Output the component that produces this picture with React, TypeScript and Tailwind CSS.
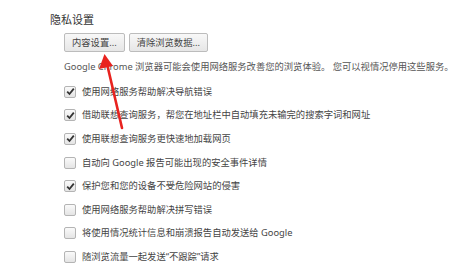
const FONT = "font-['Noto_Sans','Noto_Sans_CJK_SC',sans-serif]";

const rows = [
  { label: "使用网络服务帮助解决导航错误", checked: true },
  { label: "借助联想查询服务，帮您在地址栏中自动填充未输完的搜索字词和网址", checked: true },
  { label: "使用联想查询服务更快速地加载网页", checked: true },
  { label: "自动向 Google 报告可能出现的安全事件详情", checked: false },
  { label: "保护您和您的设备不受危险网站的侵害", checked: true },
  { label: "使用网络服务帮助解决拼写错误", checked: false },
  { label: "将使用情况统计信息和崩溃报告自动发送给 Google", checked: false },
  { label: "随浏览流量一起发送“不跟踪”请求", checked: false },
];

function Checkbox({ checked }: { checked: boolean }) {
  return (
    <span className="flex h-[12px] w-[12px] shrink-0 items-center justify-center rounded-[2px] border border-[#b4b4b4] bg-gradient-to-b from-[#fafafa] to-[#e4e4e4]">
      {checked && (
        <svg width="9" height="9" viewBox="0 0 9 9">
          <path d="M1.2 4.6 L3.5 7 L7.8 1.6" fill="none" stroke="#333" strokeWidth="1.8" />
        </svg>
      )}
    </span>
  );
}

function Button({ children }: { children: React.ReactNode }) {
  return (
    <button className="h-[19px] rounded-[2px] border border-[#bcbcbc] bg-gradient-to-b from-[#f8f8f8] to-[#e6e6e6] px-[7px] text-[9.3px] leading-none text-[#444]">
      {children}
    </button>
  );
}

export default function App() {
  return (
    <div className={`relative h-[265px] w-[454px] overflow-hidden bg-white ${FONT}`}>
      <div className="pl-[50px] pt-[13px]">
        <h2 className="text-[11px] leading-[14px] text-[#333]">隐私设置</h2>
        <div className="pl-[14px]">
          <div className="mt-[6px] flex gap-[4px]">
            <Button>内容设置...</Button>
            <Button>清除浏览数据...</Button>
          </div>
          <p className="mt-[8px] whitespace-nowrap text-[9.3px] leading-[14px] text-[#555]">
            Google Chrome 浏览器可能会使用网络服务改善您的浏览体验。 您可以视情况停用这些服务。 了解详情
          </p>
          <div className="mt-[6px] flex flex-col">
            {rows.map((r) => (
              <div key={r.label} className="flex h-[23.6px] items-center gap-[6px]">
                <Checkbox checked={r.checked} />
                <span className="whitespace-nowrap text-[9.3px] text-[#444]">{r.label}</span>
              </div>
            ))}
          </div>
        </div>
      </div>
      <svg className="absolute left-0 top-0" width="454" height="265" viewBox="0 0 454 265">
        <path d="M107.5 66 L122 128" stroke="#e8231f" strokeWidth="2.6" strokeLinecap="round" />
        <path d="M104.5 54 L99 69 L113 66 Z" fill="#e8231f" />
      </svg>
    </div>
  );
}
